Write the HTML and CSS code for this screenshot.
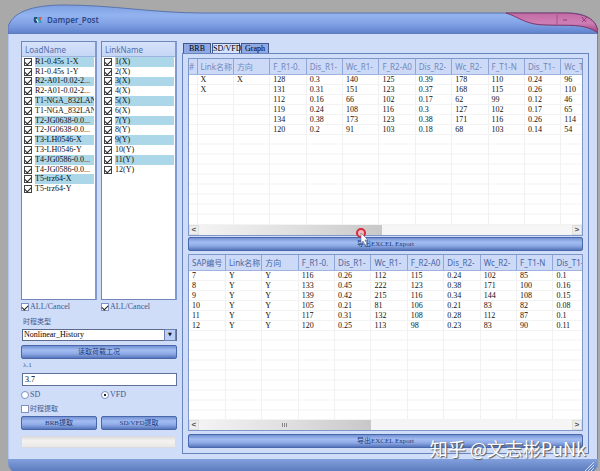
FILE: index.html
```html
<!DOCTYPE html>
<html lang="zh-CN">
<head>
    <meta charset="UTF-8">
    <title>Damper_Post</title>
    <link rel="stylesheet" href="styles.css">
</head>
<body>
    <div id="window">
        <header id="titleBar">
            <svg class="titleShape" viewBox="0 0 590 30" preserveAspectRatio="none">
                <defs>
                    <linearGradient id="blueBar" x1="0" y1="0" x2="0" y2="1">
                        <stop offset="0" stop-color="#7e9fe2"/>
                        <stop offset="0.35" stop-color="#92b3ef"/>
                        <stop offset="0.6" stop-color="#85a5e8"/>
                        <stop offset="1" stop-color="#5d80cb"/>
                    </linearGradient>
                    <linearGradient id="pinkBar" x1="0" y1="0" x2="0" y2="1">
                        <stop offset="0" stop-color="#c26aa4"/>
                        <stop offset="0.5" stop-color="#cf7fb6"/>
                        <stop offset="1" stop-color="#9c3c7c"/>
                    </linearGradient>
                </defs>
                <path d="M0 30V23C4 9 22 1 56 1C105 1 145 9 195 9H560C579 9 590 17 590 30Z" fill="url(#blueBar)" stroke="#5b74ac"/>
                <path d="M498 9H556C577 9 589 15 590 29C577 19 560 22 538 21C518 21 511 13 498 9Z" fill="url(#pinkBar)" stroke="#7e3a6c"/>
                <path d="M549 11V21" stroke="#a8508c"/>
                <path d="M555 16H559M574 13L578 18M579 13L574 18" stroke="#8e3b76" fill="none"/>
            </svg>
            <svg class="logo" viewBox="0 0 10 8">
                <path d="M1 1H4V7H2Q0 5 1 1Z" fill="#24507a"/>
                <path d="M4 1H7L9 7H6Z" fill="#2aa9c4"/>
                <path d="M6 1H9L7 5Z" fill="#e9534a"/>
                <path d="M3 3L5 6" stroke="#fff"/>
            </svg>
            <h1>Damper_Post</h1>
        </header>

        <main>
            <section id="side">
                <div class="lists">
                    <div class="list">
                        <h2>LoadName</h2>
                        <div class="items">
                            <label><input type="checkbox" checked><span>R1-0.45s 1-X</span></label>
                            <label><input type="checkbox" checked><span>R1-0.45s 1-Y</span></label>
                            <label><input type="checkbox" checked><span>R2-A01-0.02-2...</span></label>
                            <label><input type="checkbox" checked><span>R2-A01-0.02-2...</span></label>
                            <label><input type="checkbox" checked><span>T1-NGA_832LAN...</span></label>
                            <label><input type="checkbox" checked><span>T1-NGA_832LAN...</span></label>
                            <label><input type="checkbox" checked><span>T2-JG0638-0.0...</span></label>
                            <label><input type="checkbox" checked><span>T2-JG0638-0.0...</span></label>
                            <label><input type="checkbox" checked><span>T3-LH0546-X</span></label>
                            <label><input type="checkbox" checked><span>T3-LH0546-Y</span></label>
                            <label><input type="checkbox" checked><span>T4-JG0586-0.0...</span></label>
                            <label><input type="checkbox" checked><span>T4-JG0586-0.0...</span></label>
                            <label><input type="checkbox" checked><span>T5-trz64-X</span></label>
                            <label><input type="checkbox" checked><span>T5-trz64-Y</span></label>
                        </div>
                    </div>
                    <div class="list">
                        <h2>LinkName</h2>
                        <div class="items">
                            <label><input type="checkbox" checked><span>1(X)</span></label>
                            <label><input type="checkbox" checked><span>2(X)</span></label>
                            <label><input type="checkbox" checked><span>3(X)</span></label>
                            <label><input type="checkbox" checked><span>4(X)</span></label>
                            <label><input type="checkbox" checked><span>5(X)</span></label>
                            <label><input type="checkbox" checked><span>6(X)</span></label>
                            <label><input type="checkbox" checked><span>7(Y)</span></label>
                            <label><input type="checkbox" checked><span>8(Y)</span></label>
                            <label><input type="checkbox" checked><span>9(Y)</span></label>
                            <label><input type="checkbox" checked><span>10(Y)</span></label>
                            <label><input type="checkbox" checked><span>11(Y)</span></label>
                            <label><input type="checkbox" checked><span>12(Y)</span></label>
                        </div>
                    </div>
                </div>
                <div class="pair">
                    <label class="opt"><input type="checkbox" checked>ALL/Cancel</label>
                    <label class="opt"><input type="checkbox" checked>ALL/Cancel</label>
                </div>
                <label class="caption" for="historyType">时程类型</label>
                <div class="selectBox">
                    <select id="historyType">
                        <option>Nonlinear_History</option>
                    </select>
                </div>
                <button class="blue">读取荷载工况</button>
                <label class="caption lambda" for="lambda">λ.1</label>
                <input type="text" id="lambda" value="3.7">
                <div class="pair">
                    <label class="opt"><input type="radio" name="damper">SD</label>
                    <label class="opt"><input type="radio" name="damper" checked>VFD</label>
                </div>
                <label class="opt cjk"><input type="checkbox">时程提取</label>
                <div class="pair">
                    <button class="blue">BRB提取</button>
                    <button class="blue">SD/VFD提取</button>
                </div>
                <div class="progress"></div>
            </section>

            <section id="results">
                <nav class="tabs">
                    <button>BRB</button>
                    <button class="active">SD/VFD</button>
                    <button>Graph</button>
                </nav>
                <div class="page">
                    <div class="grid upper">
                        <div class="view">
                            <table>
                                <colgroup><col class="narrow"><col span="11"></colgroup>
                                <thead>
                                    <tr><th>#</th><th>Link名称</th><th>方向</th><th>F_R1-0.</th><th>Dis_R1-</th><th>Wc_R1-</th><th>F_R2-A0</th><th>Dis_R2-</th><th>Wc_R2-</th><th>F_T1-N</th><th>Dis_T1-</th><th>Wc_T1-</th></tr>
                                </thead>
                                <tbody>
                                    <tr><td></td><td>X</td><td>X</td><td>128</td><td>0.3</td><td>140</td><td>125</td><td>0.39</td><td>178</td><td>110</td><td>0.24</td><td>96</td></tr>
                                    <tr><td></td><td>X</td><td></td><td>131</td><td>0.31</td><td>151</td><td>123</td><td>0.37</td><td>168</td><td>115</td><td>0.26</td><td>110</td></tr>
                                    <tr><td></td><td></td><td></td><td>112</td><td>0.16</td><td>66</td><td>102</td><td>0.17</td><td>62</td><td>99</td><td>0.12</td><td>46</td></tr>
                                    <tr><td></td><td></td><td></td><td>119</td><td>0.24</td><td>108</td><td>116</td><td>0.3</td><td>127</td><td>102</td><td>0.17</td><td>65</td></tr>
                                    <tr><td></td><td></td><td></td><td>134</td><td>0.38</td><td>173</td><td>123</td><td>0.38</td><td>171</td><td>116</td><td>0.26</td><td>114</td></tr>
                                    <tr><td></td><td></td><td></td><td>120</td><td>0.2</td><td>91</td><td>103</td><td>0.18</td><td>68</td><td>103</td><td>0.14</td><td>54</td></tr>
                                    <tr class="rest"><td></td><td></td><td></td><td></td><td></td><td></td><td></td><td></td><td></td><td></td><td></td><td></td></tr>
                                </tbody>
                            </table>
                        </div>
                        <div class="scroll">
                            <button aria-label="left">&lt;</button>
                            <div class="track"><div class="thumb"></div></div>
                            <button aria-label="right">&gt;</button>
                        </div>
                    </div>
                    <div class="exportRow">
                        <button class="blue">导出EXCEL Export</button>
                        <svg class="pointer" viewBox="0 0 14 20">
                            <circle cx="6" cy="6" r="4" fill="#f3b9bd" stroke="#d9293b" stroke-width="2"/>
                            <path d="M6 6V17L8 14L10 18L12 17L10 13H13Z" fill="#fff" stroke="#56668f" stroke-width="0.6"/>
                        </svg>
                    </div>
                    <div class="grid lower">
                        <div class="view">
                            <table>
                                <thead>
                                    <tr><th>SAP编号</th><th>Link名称</th><th>方向</th><th>F_R1-0.</th><th>Dis_R1-</th><th>Wc_R1-</th><th>F_R2-A0</th><th>Dis_R2-</th><th>Wc_R2-</th><th>F_T1-N</th><th>Dis_T1-</th></tr>
                                </thead>
                                <tbody>
                                    <tr><td>7</td><td>Y</td><td>Y</td><td>116</td><td>0.26</td><td>112</td><td>115</td><td>0.24</td><td>102</td><td>85</td><td>0.1</td></tr>
                                    <tr><td>8</td><td>Y</td><td>Y</td><td>133</td><td>0.45</td><td>222</td><td>123</td><td>0.38</td><td>171</td><td>100</td><td>0.16</td></tr>
                                    <tr><td>9</td><td>Y</td><td>Y</td><td>139</td><td>0.42</td><td>215</td><td>116</td><td>0.34</td><td>144</td><td>108</td><td>0.15</td></tr>
                                    <tr><td>10</td><td>Y</td><td>Y</td><td>105</td><td>0.21</td><td>81</td><td>106</td><td>0.21</td><td>83</td><td>82</td><td>0.08</td></tr>
                                    <tr><td>11</td><td>Y</td><td>Y</td><td>117</td><td>0.31</td><td>132</td><td>108</td><td>0.28</td><td>112</td><td>87</td><td>0.1</td></tr>
                                    <tr><td>12</td><td>Y</td><td>Y</td><td>120</td><td>0.25</td><td>113</td><td>98</td><td>0.23</td><td>83</td><td>90</td><td>0.11</td></tr>
                                    <tr class="rest"><td></td><td></td><td></td><td></td><td></td><td></td><td></td><td></td><td></td><td></td><td></td></tr>
                                </tbody>
                            </table>
                        </div>
                        <div class="scroll">
                            <button aria-label="left">&lt;</button>
                            <div class="track"><div class="thumb"><i></i></div></div>
                            <button aria-label="right">&gt;</button>
                        </div>
                    </div>
                    <button class="blue">导出EXCEL Export</button>
                </div>
            </section>
        </main>

        <footer>
            <svg class="grip" viewBox="0 0 10 10">
                <path d="M1 10L10 1M4 10L10 4M7 10L10 7" stroke="#d5e1fb"/>
            </svg>
        </footer>
        <div class="watermark">知乎 @文志彬PuNk</div>
    </div>
</body>
</html>
```

FILE: styles.css
```css
* {
    box-sizing: border-box;
}
body {
    margin: 0;
    background: #a9a9a9;
    font-family: 'Liberation Serif', 'Noto Sans CJK SC', serif;
    font-size: 8px;
    line-height: 10px;
    color: #111;
}
button, input, select {
    font: inherit;
    margin: 0;
    padding: 0;
}
#window {
    position: relative;
    display: flex;
    flex-direction: column;
    min-height: 100vh;
    margin: 0 2px 0 8px;
}

/* title bar */
#titleBar {
    position: relative;
    display: flex;
    align-items: center;
    gap: 4px;
    height: 34px;
    padding: 6px 0 0 25px;
}
.titleShape {
    position: absolute;
    left: 0;
    top: 4px;
    width: 100%;
    height: 30px;
}
.logo {
    position: relative;
    width: 10px;
    height: 8px;
}
h1 {
    position: relative;
    margin: 0;
    font: 600 8px/10px 'Noto Sans', sans-serif;
    color: #2c4684;
}

main {
    flex: 1;
    display: flex;
    gap: 5px;
    padding: 7px 8px 5px 12px;
    background: #cfddf9;
    border-right: 1px solid #6d87bd;
    border-left: 1px solid #b4c7ee;
}
footer {
    display: flex;
    justify-content: flex-end;
    align-items: flex-end;
    height: 14px;
    padding: 0 4px 2px;
    background: linear-gradient(#83a0dd, #5676b9);
    border-radius: 0 0 10px 10px;
}
.grip {
    width: 10px;
    height: 10px;
}

/* left panel */
#side {
    flex: none;
    width: 156px;
    display: flex;
    flex-direction: column;
}
.lists, .pair {
    display: grid;
    grid-template-columns: 1fr 1fr;
    gap: 4px;
}
.lists {
    height: 259px;
}
.list {
    background: #fff;
    border: 1px solid #6f87ba;
    border-right: 2px solid #7f9ad3;
    overflow: hidden;
}
h2 {
    margin: 0;
    height: 15px;
    padding-left: 3px;
    border-bottom: 1px solid #9fb3df;
    background: linear-gradient(#d6e2fb, #c6d6f6);
    font: 400 8px/15px 'Noto Sans', sans-serif;
    color: #536fa9;
}
.items {
    display: grid;
    grid-auto-rows: 1fr;
    grid-template-rows: repeat(14, 1fr);
    height: 137px;
}
.items label {
    display: flex;
    align-items: center;
    gap: 3px;
    margin-right: 1px;
    padding-left: 2px;
    white-space: nowrap;
    overflow: hidden;
}
.items label:nth-child(odd) span {
    background: #abd7e8;
}
.items span {
    flex: 1;
}
input[type=checkbox], input[type=radio] {
    appearance: none;
    flex: none;
    display: grid;
    place-items: center;
    width: 8px;
    height: 8px;
    background: #fff;
    border: 1px solid #444;
}
input[type=radio] {
    border-radius: 50%;
}
input[type=checkbox]:checked::after {
    content: '';
    width: 5px;
    height: 3px;
    border: solid #222;
    border-width: 0 0 1px 1px;
    transform: rotate(-45deg);
}
input[type=radio]:checked::after {
    content: '';
    width: 2px;
    height: 2px;
    background: #223;
}
.opt {
    display: flex;
    align-items: center;
    gap: 1px;
    height: 14px;
    color: #3f588f;
}
.opt input[type=checkbox], .opt input[type=radio] {
    border-color: #7c93c4;
}
.cjk, .caption {
    font-size: 7px;
}
.caption {
    height: 15px;
    padding: 1px 2px 0;
    line-height: 14px;
    color: #3f588f;
}
.lambda {
    margin-top: -1px;
    padding-top: 0;
}
.selectBox {
    display: flex;
    align-items: center;
    margin: 0 0 4px 1px;
    height: 12px;
    background: #fff;
    border: 1px solid #5a6a8f;
}
.selectBox select {
    flex: 1;
    appearance: none;
    border: 0;
    background: none;
    padding-left: 1px;
}
.selectBox::after {
    content: '▼';
    width: 10px;
    height: 10px;
    background: #b9cdf5;
    border: 1px solid #6b80b0;
    font: 5px/8px 'DejaVu Sans', sans-serif;
    text-align: center;
}
#lambda {
    height: 13px;
    margin: 0 0 2px 1px;
    padding-left: 2px;
    border: 1px solid #5f7099;
    background: #fff;
}
.blue {
    height: 14px;
    border: 1px solid #4868ab;
    border-radius: 2px;
    background: linear-gradient(#7391d2, #a3bdf2 35%, #8eaae6 65%, #5775bb);
    color: #213a75;
    font-size: 7px;
    line-height: 12px;
}
.progress {
    height: 12px;
    margin: 6px 1px 0 0;
    background: linear-gradient(#ddd, #f4f3f0 40%, #e9e8e6);
    border: 1px solid #d8dbe0;
}

/* right panel */
#results {
    flex: 1;
    min-width: 0;
    display: flex;
    flex-direction: column;
    padding-top: 2px;
}
.tabs {
    display: flex;
    gap: 1px;
    padding-left: 1px;
}
.tabs button {
    width: 28px;
    height: 10px;
    border: 1px solid #43568c;
    border-bottom: 0;
    background: #8fa9e2;
    font-size: 8px;
    line-height: 9px;
    white-space: nowrap;
}
.tabs .active {
    background: #d8e4fc;
}
.page {
    flex: 1;
    display: flex;
    flex-direction: column;
    padding: 4px 5px 5px;
    border: 1px solid #6883bd;
}
.grid {
    display: flex;
    flex-direction: column;
    background: #fff;
    border: 1px solid #7f98cc;
}
.upper {
    height: 178px;
}
.lower {
    height: 177px;
    margin: 2px 0 3px;
}
.view {
    flex: 1;
    min-height: 0;
    overflow: hidden;
}
table {
    table-layout: fixed;
    width: 102%;
    height: 100%;
    border-collapse: collapse;
}
.upper table {
    width: 104%;
}
.narrow {
    width: 8px;
}
th {
    height: 15px;
    padding: 0 0 0 3px;
    border-right: 1px solid #8fa6d8;
    border-bottom: 1px solid #9fb3df;
    background: #ccdaf8;
    font: 400 8px/13px 'Noto Sans', 'Noto Sans CJK SC', sans-serif;
    color: #4b66a0;
    text-align: left;
    white-space: nowrap;
}
.upper th:first-child {
    padding: 0;
}
.upper th {
    color: #7389b8;
}
td {
    height: 10px;
    padding: 0 0 0 3px;
    border-right: 1px solid #f1f1f1;
    border-bottom: 1px solid #f3f3f3;
    line-height: 9px;
}
.rest td {
    height: auto;
    background: repeating-linear-gradient(#fff 0 9px, #f3f3f3 9px 10px);
}
.scroll {
    display: flex;
    height: 10px;
    background: #f5f5f5;
}
.scroll button {
    width: 10px;
    border: 1px solid #ddd;
    background: #eee;
    font: 700 8px/8px 'Liberation Mono', monospace;
    color: #555;
}
.track {
    flex: 1;
}
.thumb {
    display: flex;
    align-items: center;
    justify-content: center;
    width: 49%;
    height: 100%;
    background: linear-gradient(90deg, #f3f3f3, #dedede 55%, #c8c8c8);
}
.lower .thumb {
    width: 46%;
}
.thumb i {
    width: 5px;
    height: 4px;
    background: repeating-linear-gradient(90deg, #888 0 1px, #e3e3e3 1px 2px);
}
.exportRow {
    position: relative;
    display: flex;
    padding: 1px 0;
}
.exportRow .blue {
    flex: 1;
}
.pointer {
    position: absolute;
    left: 43%;
    top: -9px;
    width: 14px;
    height: 20px;
    margin-left: -3px;
}

.watermark {
    position: absolute;
    right: 12px;
    bottom: 12px;
    font: 400 18px/26px 'Noto Sans CJK SC', sans-serif;
    color: #fff;
    text-shadow: 1px 1px 1px #555;
}
```
